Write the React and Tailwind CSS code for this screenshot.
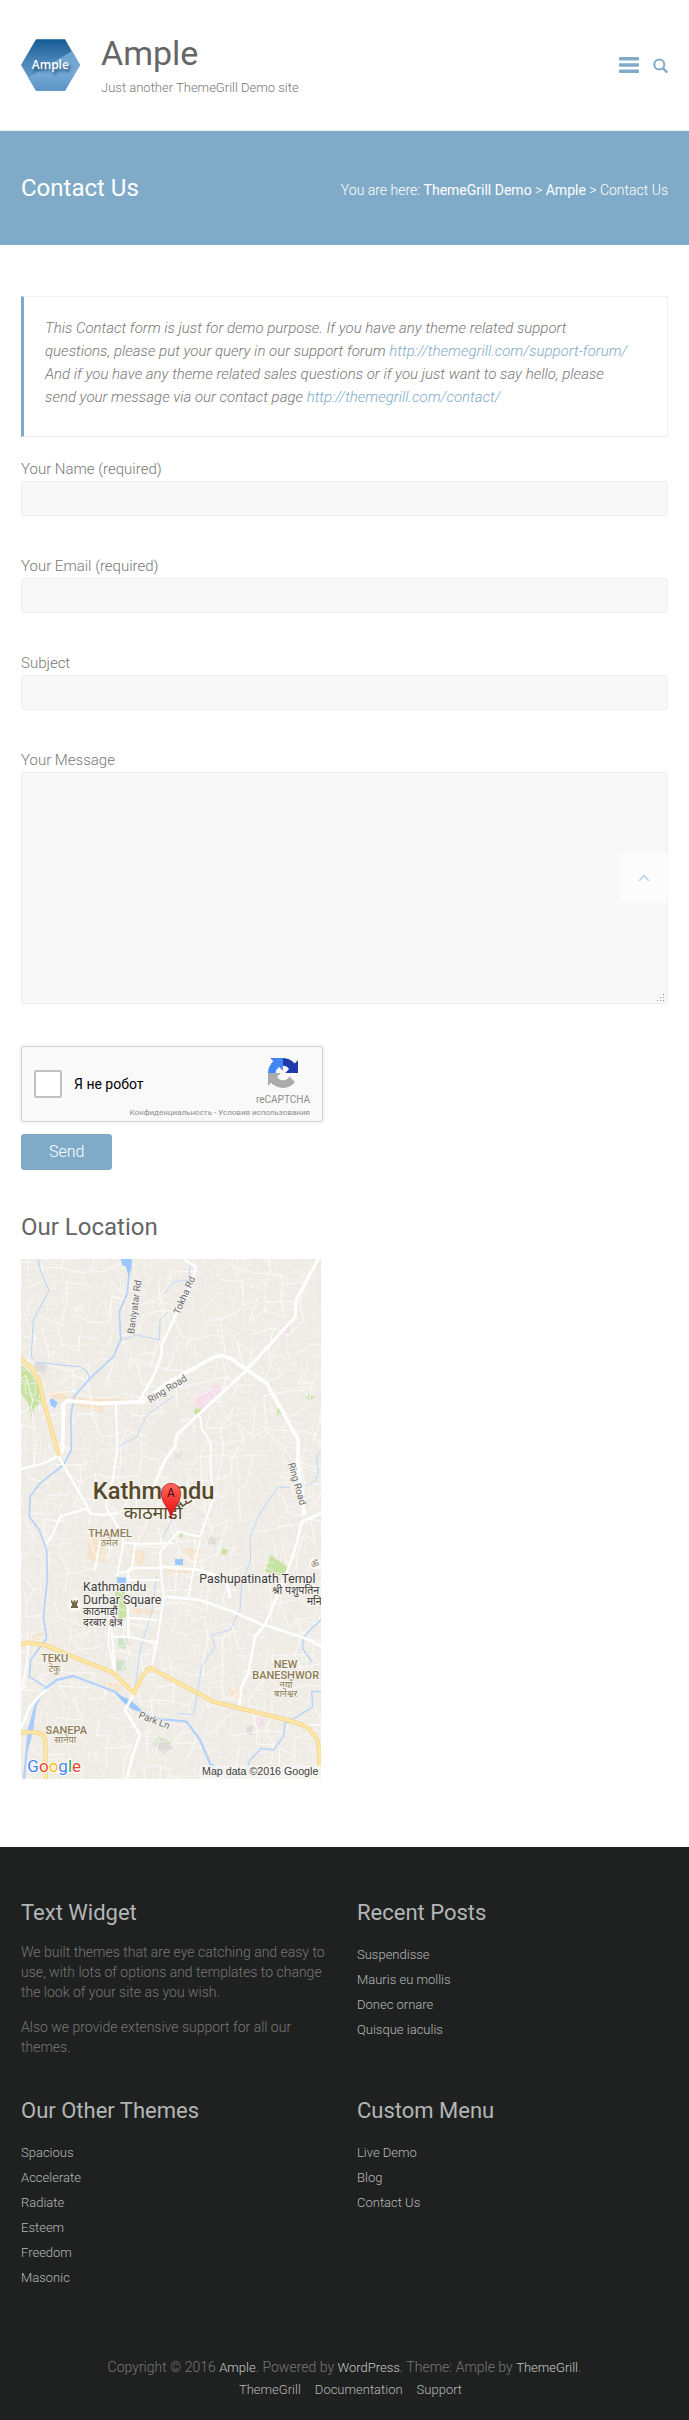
import React from "react";

const otherThemes = ["Spacious", "Accelerate", "Radiate", "Esteem", "Freedom", "Masonic"];
const recentPosts = ["Suspendisse", "Mauris eu mollis", "Donec ornare", "Quisque iaculis"];
const menuLinks = ["Live Demo", "Blog", "Contact Us"];

/* Builds the web of small streets: a jittered grid with random gaps. */
function buildStreets(seed, step, keep) {
  let s = seed;
  const rnd = () => {
    s = (s * 16807) % 2147483647;
    return s / 2147483647;
  };
  const cols = Math.ceil(960 / step) + 1;
  const rows = Math.ceil(1620 / step) + 1;
  const pts = [];
  for (let r = 0; r < rows; r++) {
    const row = [];
    for (let c = 0; c < cols; c++) {
      row.push([
        Math.round(40 + c * step + (rnd() - 0.5) * step * 0.9),
        Math.round(10 + r * step + (rnd() - 0.5) * step * 0.9),
      ]);
    }
    pts.push(row);
  }
  let d = "";
  for (let r = 0; r < rows - 1; r++) {
    for (let c = 0; c < cols - 1; c++) {
      const [x, y] = pts[r][c];
      if (rnd() < keep) d += `M${x} ${y}L${pts[r][c + 1][0]} ${pts[r][c + 1][1]}`;
      if (rnd() < keep) d += `M${x} ${y}L${pts[r + 1][c][0]} ${pts[r + 1][c][1]}`;
    }
  }
  return d;
}

const fineStreets = buildStreets(4711, 21, 0.55);
const wideStreets = buildStreets(977, 48, 0.42);

function Logo() {
  return (
    <svg viewBox="0 0 177 156" className="h-[52px] w-[59px]" role="img" aria-label="Ample logo">
      <defs>
        <linearGradient id="hexDark" x1="0" y1="0" x2="0" y2="1">
          <stop offset="0" stopColor="#155a94" />
          <stop offset="0.45" stopColor="#4d88b9" />
          <stop offset="1" stopColor="#6ba3d2" />
        </linearGradient>
        <linearGradient id="hexLight" x1="0" y1="0" x2="0" y2="1">
          <stop offset="0" stopColor="#6fa3cf" />
          <stop offset="0.55" stopColor="#76aad6" />
          <stop offset="1" stopColor="#5b93c4" />
        </linearGradient>
      </defs>
      <path d="M45 1H132L177 78L132 155H45L0 78Z" fill="url(#hexDark)" />
      <path d="M153 36L177 78L132 155H45L22 116Z" fill="url(#hexLight)" />
      <text x="88" y="89" textAnchor="middle" fontFamily="Open Sans" fontWeight="600" fontSize="36" fill="#fff" className="[text-shadow:2px_3px_3px_#1f4a70]">Ample</text>
    </svg>
  );
}

function RecaptchaLogo() {
  return (
    <svg viewBox="0 0 64 64" className="h-[30px] w-[30px]" aria-hidden="true">
      <path fill="#1c3aa9" d="M64 31.955l-.033-1.37V4.687l-7.16 7.16C50.948 4.674 42.033.093 32.05.093c-10.4 0-19.622 4.96-25.458 12.64l11.736 11.86a15.55 15.55 0 0 1 4.754-5.334c2.05-1.6 4.952-2.906 8.968-2.906.485 0 .86.057 1.135.163 4.976.393 9.288 3.14 11.828 7.124l-8.307 8.307L64 31.953" />
      <path fill="#4285f4" d="M31.862.094l-1.37.033H4.594l7.16 7.16C4.58 13.147 0 22.06 0 32.046c0 10.4 4.96 19.622 12.64 25.458L24.5 45.768a15.55 15.55 0 0 1-5.334-4.754c-1.6-2.05-2.906-4.952-2.906-8.968 0-.485.057-.86.163-1.135.393-4.976 3.14-9.288 7.124-11.828l8.307 8.307L31.86.095" />
      <path fill="#ababab" d="M.001 32.045l.033 1.37v25.898l7.16-7.16c5.86 7.173 14.774 11.754 24.76 11.754 10.4 0 19.622-4.96 25.458-12.64l-11.736-11.86a15.55 15.55 0 0 1-4.754 5.334c-2.05 1.6-4.952 2.906-8.968 2.906-.485 0-.86-.057-1.135-.163-4.976-.393-9.288-3.14-11.828-7.124l8.307-8.307c-10.522.04-22.4.066-27.295-.005" />
    </svg>
  );
}

function CityMap() {
  const deva = "Noto Sans Devanagari, Noto Sans, sans-serif";
  return (
    <svg viewBox="63 27 900 1560" className="block h-[520px] w-[300px]" role="img" aria-label="Map of Kathmandu" fontFamily="Roboto, sans-serif" fontWeight="400">
      <defs>
        <linearGradient id="pin" x1="0" y1="0" x2="0" y2="1">
          <stop offset="0" stopColor="#fd6a5f" />
          <stop offset="0.5" stopColor="#f6352f" />
          <stop offset="1" stopColor="#d90808" />
        </linearGradient>
      </defs>
      <rect x="63" y="27" width="900" height="1560" fill="#efece6" />

      {/* parks, hospitals and built-up areas */}
      <g fill="#c7e3a3">
        <path d="M63 345C95 365 120 400 126 455L105 475L95 505L85 460L63 430Z" />
        <path d="M835 470L855 492L848 500L828 495ZM920 437L930 432L942 442L935 448L918 446ZM585 475L605 478L596 498L582 490Z" />
        <path d="M812 915L862 950L848 978L795 965ZM668 895L684 900L678 915L662 910ZM538 850L550 850L545 865L535 862Z" />
        <path d="M345 1025H375V1045L380 1100L355 1110L358 1050L345 1040ZM475 1460L512 1475L495 1500L465 1480Z" />
      </g>
      <path d="M355 1165L380 1162L388 1185L372 1198L352 1190ZM345 1230L380 1232V1260L348 1265Z" fill="#cfe3cb" />
      <g fill="#f5dde8">
        <path d="M600 425L655 400L665 420L605 478L578 465ZM845 240L865 228L875 240L855 255ZM765 1410L785 1400L795 1420L775 1435Z" />
      </g>
      <g fill="#dddcd8">
        <path d="M100 338L148 338L138 375L108 362ZM525 615L545 605L540 625L522 630ZM622 860L655 865L650 885L624 882ZM740 1430L760 1425L755 1455L738 1450ZM455 1480L490 1465L520 1495L490 1512Z" />
      </g>
      <g fill="#f6e3cb">
        <path d="M140 420L250 445L365 445V465L310 468V490L240 470L150 440Z" />
        <path d="M265 830L320 840L315 940L262 930ZM395 900L435 905L425 950L400 945ZM500 950L575 960L570 970L500 965ZM555 895L600 900L585 945ZM395 1075L470 1080V1093L400 1090ZM680 1310L740 1325L720 1350L690 1335ZM312 1298L365 1300L360 1325L315 1320ZM80 1170L130 1140L120 1170Z" />
      </g>

      {/* small streets */}
      <path d={fineStreets} fill="none" stroke="#f9f8f5" strokeWidth="2" />
      <path d={wideStreets} fill="none" stroke="#fdfdfc" strokeWidth="2.6" strokeLinejoin="round" />
      <path d="M440 560L490 490L535 470L545 530L500 600L450 600Z" fill="#eeebe4" />

      {/* rivers and ponds */}
      <g fill="none" stroke="#b2d2fb" strokeLinejoin="round" strokeLinecap="round">
        <path strokeWidth="3" d="M115 27L122 65L147 122L100 210L94 320L108 337L240 350L262 365L268 385" />
        <path strokeWidth="5" d="M388 60L382 130L358 185L362 270L340 320L270 385L222 440L212 500L214 600L190 645L120 700L90 740L88 800L118 840L140 900L142 990L130 1100L140 1165L92 1230L88 1280L138 1312" />
        <path strokeWidth="2.5" d="M362 270L410 255L478 270L480 210L500 190M495 130L515 100L545 90L568 92M520 440L440 495L410 560L355 590M570 45L567 78" />
        <path strokeWidth="2.5" d="M963 600L950 620L955 665L945 695L918 705M868 712L835 712L800 760L775 800L750 860L752 930L725 1000L720 1080L690 1140L635 1155L645 1190L605 1250L590 1340L580 1395L535 1390" />
        <path strokeWidth="4" d="M963 1110L930 1140L910 1165L908 1195L935 1235M963 1325L935 1325L938 1370L900 1395L855 1420L850 1460L820 1500L785 1495L750 1530L735 1570" />
        <path strokeWidth="7" d="M72 1587L78 1520L85 1450L105 1370L130 1320L170 1290L220 1278L300 1308L345 1325L395 1370L460 1405L560 1415L600 1470L630 1540L690 1587" />
        <path strokeWidth="2.5" d="M540 720L520 800L490 860M470 980L455 1090L420 1200L405 1320" />
      </g>
      <g fill="#9cc8ff">
        <path d="M362 27H396L395 55L385 78L378 50L366 45ZM148 450L158 445L173 458L165 475L152 466ZM350 982H378V1000H352ZM524 927H549V945H526ZM345 1330L392 1350L430 1385L400 1380L375 1362Z" />
      </g>
      <path d="M85 1430L110 1360L100 1440L82 1510Z" fill="#a9cdfb" />

      {/* main roads */}
      <g fill="none" stroke="#ffffff" strokeLinejoin="round" strokeLinecap="round">
        <path strokeWidth="11" d="M175 615L188 600L190 465L200 452L300 461L430 455L500 400L640 322L665 316L690 325L800 400L845 480L895 570L893 630L912 790" />
        <path strokeWidth="9" d="M955 27L888 150L886 200L740 360L530 555L525 590L495 630L465 700" />
        <path strokeWidth="8" d="M555 30L588 52L575 100L530 190L485 285V315L462 375L420 450" />
        <path strokeWidth="7" d="M63 657L130 640L175 618L262 770L268 790L310 795L350 790M262 775L180 800L160 850L140 880" />
        <path strokeWidth="6" d="M348 465L352 590L340 680L318 770L365 850L370 880L352 975M600 500L605 535L632 580V660L642 740L600 860L535 845L480 905L485 990L492 1040L470 1180L455 1250" />
        <path strokeWidth="6" d="M370 878L430 882L520 880M300 870L285 960M405 885L395 960L360 970M390 955L480 953M385 990H475M385 960L384 1035L385 1160L472 1180M340 1160L385 1160M385 1103L470 1110M330 1090L345 1260" />
        <path strokeWidth="8" d="M963 790L905 815L890 880L860 970L795 1125L930 1170L963 1190M795 1125L765 1160L745 1270L725 1310L718 1370M480 950L600 960L680 990L690 1040" />
        <path strokeWidth="8" d="M500 1040L600 1050L700 1085L795 1128M400 1335L375 1380L420 1455L400 1510L380 1587M135 1320L90 1370L65 1430" />
        <path strokeWidth="5" d="M85 1185L80 1240L65 1320M345 1270L325 1180L330 1100M600 870L580 960L565 1040M963 1425L920 1425" />
      </g>

      {/* highways */}
      <g fill="none" strokeLinejoin="round" strokeLinecap="round">
        <g stroke="#efd28e" strokeWidth="13">
          <path d="M60 325L95 355L118 395L130 450L175 612" />
          <path d="M55 1187L80 1178L135 1185L230 1225L340 1268L402 1330L425 1280L450 1253L640 1355L720 1375L880 1415L920 1430L950 1465L958 1500V1600" />
          <path d="M55 1447H110L130 1456L136 1470L137 1600" />
        </g>
        <g stroke="#ffe6a3" strokeWidth="9">
          <path d="M60 325L95 355L118 395L130 450L175 612" />
          <path d="M55 1187L80 1178L135 1185L230 1225L340 1268L402 1330L425 1280L450 1253L640 1355L720 1375L880 1415L920 1430L950 1465L958 1500V1600" />
          <path d="M55 1447H110L130 1456L136 1470L137 1600" />
        </g>
      </g>

      {/* road names */}
      <g fontSize="29" fill="#6b6b6b" stroke="#f6f4f0" strokeWidth="5" paintOrder="stroke" textAnchor="middle">
        <text transform="translate(413 172) rotate(-82)">Baniyatar Rd</text>
        <text transform="translate(562 140) rotate(-66)">Tokha Rd</text>
        <text transform="translate(507 425) rotate(-32)">Ring Road</text>
        <text transform="translate(882 704) rotate(74)">Ring Road</text>
        <text transform="translate(459 1420) rotate(21)">Park Ln</text>
      </g>

      {/* places */}
      <g stroke="#f6f4f0" strokeWidth="6" paintOrder="stroke" textAnchor="middle">
        <g fill="#55492a">
          <text x="461" y="747" fontSize="71" fontWeight="500">Kathmandu</text>
          <text x="459" y="808" fontSize="54" fontFamily={deva}>काठमाडौं</text>
        </g>
        <g fill="#8d7c55" fontSize="33" fontWeight="500">
          <text x="330" y="861">THAMEL</text>
          <text x="164" y="1235">TEKU</text>
          <text x="857" y="1253">NEW</text>
          <text x="857" y="1286">BANESHWOR</text>
          <text x="199" y="1451">SANEPA</text>
        </g>
        <g fill="#8d7c55" fontSize="28" fontFamily={deva}>
          <text x="328" y="888">ठमेल</text>
          <text x="163" y="1266">टेकु</text>
          <text x="858" y="1313">नयाँ</text>
          <text x="857" y="1342">बानेश्वर</text>
          <text x="196" y="1479">सानेपा</text>
        </g>
      </g>
      <g stroke="#f6f4f0" strokeWidth="6" paintOrder="stroke" fill="#3d3d3d">
        <g fontSize="37">
          <text x="249" y="1023">Kathmandu</text>
          <text x="249" y="1062">Durbar Square</text>
          <text x="598" y="999">Pashupatinath Templ</text>
        </g>
        <g fontSize="32" fontFamily={deva}>
          <text x="249" y="1094">काठमाडौं</text>
          <text x="249" y="1128">दरबार क्षेत्र</text>
          <text x="816" y="1031">श्री पशुपतिन</text>
          <text x="920" y="1064">मनि</text>
        </g>
      </g>

      {/* landmark dots */}
      <circle cx="223" cy="1064" r="20" fill="#faf9f6" />
      <path d="M213 1051H217V1055H221V1051H226V1055H230V1051H234V1059H231V1068H234V1074H213V1068H216V1059H213Z" fill="#75684c" />
      <circle cx="945" cy="941" r="18" fill="#faf9f6" />
      <text x="945" y="950" fontSize="26" textAnchor="middle" fill="#75684c" fontFamily={deva}>ॐ</text>
      <path d="M538 755L548 768L560 760L556 752M562 760L576 752" stroke="#55492a" strokeWidth="4" fill="none" />

      {/* marker */}
      <path d="M513 806C510 775 484 762 484 729A29 29 0 1 1 542 729C542 762 516 775 513 806Z" fill="url(#pin)" stroke="#b31010" strokeWidth="2" />
      <text x="513" y="742" fontSize="36" textAnchor="middle" fill="#4a0a0a">A</text>

      {/* attribution */}
      <rect x="598" y="1547" width="365" height="40" fill="#f7f6f3" opacity="0.85" />
      <text x="955" y="1574" fontSize="32" textAnchor="end" fill="#3f3f3f" fontFamily="Liberation Sans, Arial, sans-serif">Map data ©2016 Google</text>
      <text x="82" y="1565" fontSize="51" stroke="#fff" strokeWidth="6" paintOrder="stroke">
        <tspan fill="#4285f4">G</tspan>
        <tspan fill="#ea4335">o</tspan>
        <tspan fill="#fbbc05">o</tspan>
        <tspan fill="#4285f4">g</tspan>
        <tspan fill="#34a853">l</tspan>
        <tspan fill="#ea4335">e</tspan>
      </text>
    </svg>
  );
}

function Field({ id, label, type }) {
  return (
    <div className="mb-[39px]">
      <label htmlFor={id} className="block leading-[23px]">{label}</label>
      <input id={id} type={type} className="block h-[35px] w-full rounded-[3px] border border-[#eeeeee] bg-[#f8f8f8] px-3 outline-none" />
    </div>
  );
}

function Widget({ title, children }) {
  return (
    <section>
      <h2 className="mb-[14px] text-[22px] leading-[30px] font-normal text-[#b3b6b6]">{title}</h2>
      {children}
    </section>
  );
}

function LinkList({ items }) {
  return (
    <ul className="text-[13px] leading-[25px] text-[#b5b8b8]">
      {items.map((item) => (
        <li key={item}><a href="#">{item}</a></li>
      ))}
    </ul>
  );
}

export default function App() {
  return (
    <div className="bg-white font-['Roboto',sans-serif] text-[15px] font-light text-[#777777]">
      <header className="flex items-center border-b border-[#eaeaea] px-[21px] py-[30px]">
        <a href="#" className="mr-[21px]"><Logo /></a>
        <div className="flex-1 pt-0.5">
          <h1 className="text-[34px] leading-[43px] font-normal text-[#666666]"><a href="#">Ample</a></h1>
          <p className="text-[13px] leading-[25px]">Just another ThemeGrill Demo site</p>
        </div>
        <div className="flex items-center gap-[14px]">
          <button type="button" aria-label="Menu">
            <svg viewBox="0 0 20 16" className="h-4 w-5" fill="#80abc8">
              <rect width="20" height="3.4" rx="1" />
              <rect y="6.3" width="20" height="3.4" rx="1" />
              <rect y="12.6" width="20" height="3.4" rx="1" />
            </svg>
          </button>
          <button type="button" aria-label="Search">
            <svg viewBox="0 0 15 15" className="h-[15px] w-[15px]" fill="none" stroke="#80abc8" strokeWidth="2" strokeLinecap="round">
              <circle cx="6.3" cy="6.6" r="5" />
              <path d="M10 10.4L13.6 13.8" strokeWidth="2.4" />
            </svg>
          </button>
        </div>
      </header>

      <div className="flex h-[114px] items-center justify-between bg-[#80abc8] px-[21px] text-white">
        <h2 className="text-[24px] leading-8 font-normal">Contact Us</h2>
        <nav aria-label="Breadcrumb" className="pt-1 text-[14px] leading-5">
          You are here: <a href="#" className="font-normal">ThemeGrill Demo</a> &gt; <a href="#" className="font-normal">Ample</a> &gt; Contact Us
        </nav>
      </div>

      <main className="px-[21px] pt-[51px] pb-[68px]">
        <blockquote className="mb-[21px] border border-l-[3px] border-[#f0f0f0] border-l-[#80abc8] pt-5 pr-5 pb-[27px] pl-[21px] leading-[23px] italic">
          This Contact form is just for demo purpose. If you have any theme related support
          <br />
          questions, please put your query in our support forum <a href="#" className="text-[#80abc8]">http://themegrill.com/support-forum/</a>
          <br />
          And if you have any theme related sales questions or if you just want to say hello, please
          <br />
          send your message via our contact page <a href="#" className="text-[#80abc8]">http://themegrill.com/contact/</a>
        </blockquote>

        <form onSubmit={(e) => e.preventDefault()}>
          <Field id="name" type="text" label="Your Name (required)" />
          <Field id="email" type="email" label="Your Email (required)" />
          <Field id="subject" type="text" label="Subject" />
          <label htmlFor="message" className="block leading-[23px]">Your Message</label>
          <div className="relative mb-[42px]">
            <textarea id="message" className="block h-[232px] w-full resize-none rounded-[3px] border border-[#eeeeee] bg-[#f8f8f8] p-3 outline-none" />
            <svg viewBox="0 0 8 8" className="pointer-events-none absolute right-[3px] bottom-[3px] h-2 w-2" fill="#8f8f8f" aria-hidden="true">
              <path d="M0 7h1v1H0zM3 7h1v1H3zM6 7h1v1H6zM3 4h1v1H3zM6 4h1v1H6zM6 1h1v1H6z" />
            </svg>
            <a href="#" aria-label="Back to top" className="absolute top-[81px] right-0 flex h-[49px] w-[49px] items-center justify-center bg-white/50">
              <svg viewBox="0 0 12 8" className="h-2 w-3" fill="none" stroke="#bfd5e4" strokeWidth="1.8" aria-hidden="true">
                <path d="M1 7L6 1.5L11 7" />
              </svg>
            </a>
          </div>

          <div className="mb-3 flex h-[76px] w-[302px] justify-between rounded-[3px] border border-[#d3d3d3] bg-[#f9f9f9] pr-3 pl-3 shadow-[0_0_4px_1px_rgba(0,0,0,0.08)]">
            <div className="flex items-center gap-3">
              <input id="robot" type="checkbox" className="h-7 w-7 appearance-none rounded-[2px] border-2 border-[#c1c1c1] bg-white" />
              <label htmlFor="robot" className="text-[14px] leading-4 font-normal text-black">Я не робот</label>
            </div>
            <div className="-ml-28 flex flex-col items-end pt-[11px] font-normal text-[#8e8e8e]">
              <div className="flex flex-col items-center">
                <RecaptchaLogo />
                <span className="mt-1 text-[10px] leading-4">reCAPTCHA</span>
              </div>
              <span className="text-[8px] leading-[10px] whitespace-nowrap"><a href="#">Конфиденциальность</a> - <a href="#">Условия использования</a></span>
            </div>
          </div>
          <button type="submit" className="block h-9 rounded-[3px] bg-[#80abc8] px-7 text-base leading-5 text-white">Send</button>
        </form>

        <h2 className="mt-[41px] mb-4 text-[24px] leading-8 font-normal text-[#666666]">Our Location</h2>
        <CityMap />
      </main>

      <footer className="bg-[#1f2121] px-[21px] pt-[51px] pb-5">
        <div className="grid grid-cols-2 gap-x-[25px] gap-y-[39px]">
          <Widget title="Text Widget">
            <p className="mb-[15px] text-[14px] leading-5">We built themes that are eye catching and easy to use, with lots of options and templates to change the look of your site as you wish.</p>
            <p className="text-[14px] leading-5">Also we provide extensive support for all our themes.</p>
          </Widget>
          <Widget title="Recent Posts"><LinkList items={recentPosts} /></Widget>
          <Widget title="Our Other Themes"><LinkList items={otherThemes} /></Widget>
          <Widget title="Custom Menu"><LinkList items={menuLinks} /></Widget>
        </div>
        <div className="mt-[66px] text-center text-[14px] leading-[22px]">
          <p>
            Copyright © 2016 <a href="#" className="text-[13px] text-[#c5c8c8]">Ample</a>. Powered by <a href="#" className="text-[13px] text-[#c5c8c8]">WordPress</a>. Theme: Ample by <a href="#" className="text-[13px] text-[#c5c8c8]">ThemeGrill</a>.
          </p>
          <nav className="flex justify-center gap-[14px] pl-3 text-[13px] text-[#b5b8b8]">
            <a href="#">ThemeGrill</a>
            <a href="#">Documentation</a>
            <a href="#">Support</a>
          </nav>
        </div>
      </footer>
    </div>
  );
}
